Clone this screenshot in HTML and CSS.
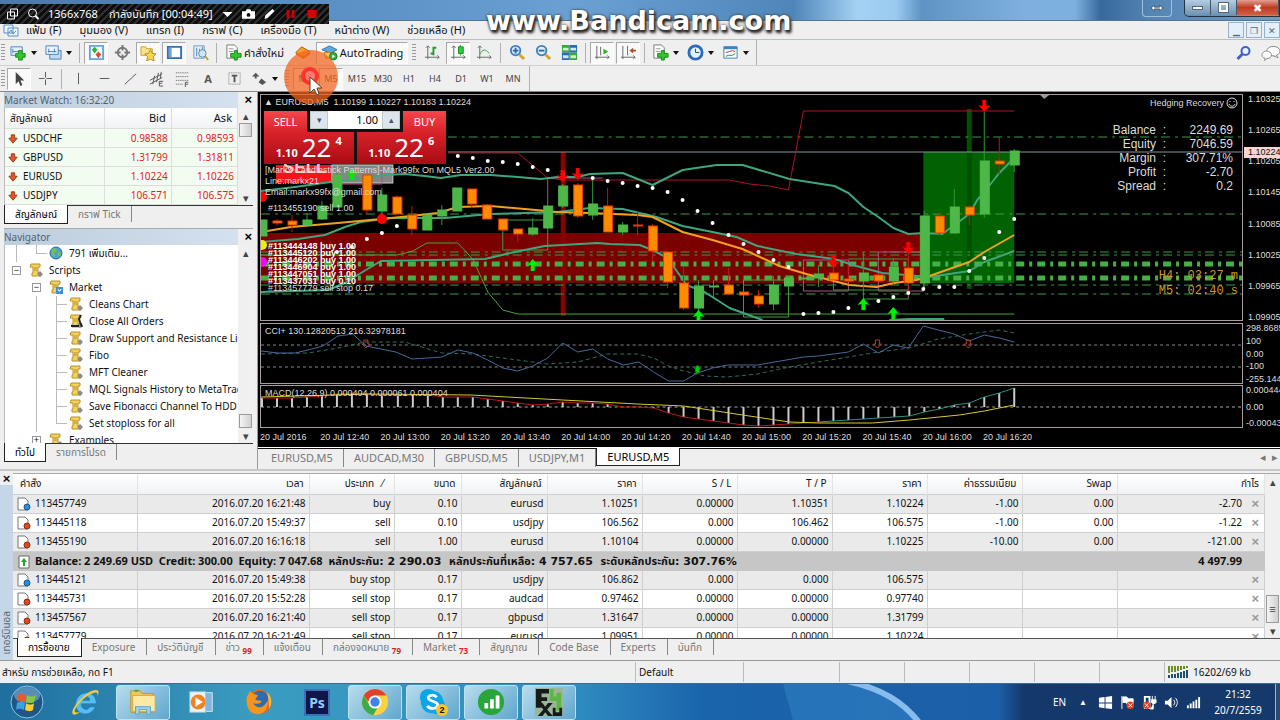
FILE: index.html
```html
<!DOCTYPE html>
<html lang="th">
<head>
	<meta charset="UTF-8">
	<title>EURUSD,M5</title>
	<link rel="stylesheet" href="styles.css">
</head>
<body>
	<!-- icons -->
	<svg class="defs" aria-hidden="true">
		<symbol id="i-win" viewBox="0 0 16 16"><path d="M1 3h9v8H1zM5 6h10v8H5z" fill="#eef6fd" stroke="#5b8fc0"/><path d="M6 11l2-3 2 4 3-3" fill="none" stroke="#5b8fc0"/></symbol>
		<symbol id="i-newchart" viewBox="0 0 18 18"><path d="M1 3h12v9H1z" fill="#e5f2fc" stroke="#4d86b8"/><path d="M3 5v5M3 8h6" stroke="#4d86b8" fill="none"/><path d="M9 7h4v3h3v4h-3v3H9v-3H6v-4h3z" fill="#31c52f" stroke="#168a18"/></symbol>
		<symbol id="i-profile" viewBox="0 0 18 18"><path d="M5 7h12v9H5z" fill="#bcdcf5" stroke="#4a7fb5"/><path d="M1 2h13v9H1z" fill="#e9f4fd" stroke="#4a7fb5"/><path d="M3 8h9M4 5v4M10 5v4" stroke="#4a7fb5"/></symbol>
		<symbol id="i-market" viewBox="0 0 18 18"><path d="M2 2h14v14H2z" fill="#f7fbff" stroke="#6aa3dc" stroke-width="2"/><path d="M7 3l3 3-3 4-3-4z" fill="#2fb32f"/><path d="M11 8l3 3-3 4-3-4z" fill="#e24b21"/></symbol>
		<symbol id="i-data" viewBox="0 0 18 18"><circle cx="9" cy="9" r="5" fill="none" stroke="#777" stroke-width="2"/><path d="M9 1v6M9 11v6M1 9h6M11 9h6" stroke="#777" stroke-width="2"/></symbol>
		<symbol id="i-star" viewBox="0 0 18 18"><path d="M1 3h5l1 2h6v7H1z" fill="#fbe48c" stroke="#c79f2c"/><path d="M11 6l2 4 4 .5-3 3 1 4.500-4-2-4 2 1-4.500-3-3 4-.5z" fill="#ffd646" stroke="#b5882a"/></symbol>
		<symbol id="i-term" viewBox="0 0 18 18"><path d="M2 3h14v12H2z" fill="#fff" stroke="#2f6fb8" stroke-width="2"/><path d="M3 4h3v10H3z" fill="#6aa5dc"/></symbol>
		<symbol id="i-tester" viewBox="0 0 18 18"><path d="M2 2h11v13H2z" fill="#e7f1fa" stroke="#6b96bd"/><path d="M5 4v9M8 5v8M11 3v7" stroke="#4a7fb5"/><circle cx="11" cy="10" r="4" fill="#cfe5f5" stroke="#5c87ae"/><path d="M14 13l3 4" stroke="#c8952f" stroke-width="2"/></symbol>
		<symbol id="i-order" viewBox="0 0 18 18"><path d="M2 1h8l3 3v11H2z" fill="#fdfdfd" stroke="#777"/><path d="M4 5h5M4 8h5" stroke="#999"/><path d="M10 7h3v3h4v4h-4v3h-3v-3H6v-4h4z" fill="#31c52f" stroke="#168a18"/></symbol>
		<symbol id="i-meta" viewBox="0 0 18 18"><path d="M2 9l6-6 9 5-7 7z" fill="#f7a02b" stroke="#a8590d"/><path d="M2 9l8 4v3l-8-5zM10 13l7-5v3l-7 5z" fill="#d0730f"/></symbol>
		<symbol id="i-auto" viewBox="0 0 18 18"><path d="M1 6l8-4 8 4-7 4z" fill="#5aa8dc" stroke="#2c76ad"/><path d="M3 9h10l-2 6H5z" fill="#f3cc5c" stroke="#b5882a"/><circle cx="13" cy="13" r="4" fill="#2fb23b" stroke="#158024"/><path d="M12 11l3 2-3 2z" fill="#fff"/></symbol>
		<symbol id="i-bars" viewBox="0 0 18 18"><path d="M4 2v14M2 4l2-2 2 2M1 14h15M14 12l2 2-2 2" fill="none" stroke="#666"/><path d="M10 3v9M10 4h3M7 10h3" stroke="#1d9d2b" stroke-width="2"/></symbol>
		<symbol id="i-candle" viewBox="0 0 18 18"><path d="M4 2v14M2 4l2-2 2 2M1 14h15M14 12l2 2-2 2" fill="none" stroke="#666"/><path d="M11 1v11" stroke="#178a22"/><path d="M9 3h5v7H9z" fill="#2fd03a" stroke="#178a22"/></symbol>
		<symbol id="i-line" viewBox="0 0 18 18"><path d="M4 2v14M2 4l2-2 2 2M1 14h15M14 12l2 2-2 2" fill="none" stroke="#666"/><path d="M4 11c3-6 6-6 10-1" fill="none" stroke="#3aa845"/></symbol>
		<symbol id="i-zin" viewBox="0 0 18 18"><path d="M11 11l5 5" stroke="#d3a52c" stroke-width="3"/><circle cx="7" cy="7" r="5" fill="#dff0fc" stroke="#3f7fc4" stroke-width="2"/><path d="M4 7h6M7 4v6" stroke="#2869b5" stroke-width="2"/></symbol>
		<symbol id="i-zout" viewBox="0 0 18 18"><path d="M11 11l5 5" stroke="#d3a52c" stroke-width="3"/><circle cx="7" cy="7" r="5" fill="#dff0fc" stroke="#3f7fc4" stroke-width="2"/><path d="M4 7h6" stroke="#2869b5" stroke-width="2"/></symbol>
		<symbol id="i-tile" viewBox="0 0 18 18"><path d="M1 1h8v8H1zM9 9h8v8H9z" fill="#3aa63c"/><path d="M9 1h8v8H9zM1 9h8v8H1z" fill="#2c69b8"/><path d="M2 4h6v3H2zM10 4h6v3h-6zM2 12h6v3H2zM10 12h6v3h-6z" fill="#d3ead8"/></symbol>
		<symbol id="i-scroll" viewBox="0 0 18 18"><path d="M3 2v14M1 14h15M14 12l2 2-2 2M7 3v9" fill="none" stroke="#666"/><path d="M10 5l5 3-5 3z" fill="#2fb32f"/></symbol>
		<symbol id="i-shift" viewBox="0 0 18 18"><path d="M3 2v14M1 14h15M14 12l2 2-2 2M8 2v10" fill="none" stroke="#666"/><path d="M10 7l4-3v2h3v2h-3v2z" fill="#b5482a"/></symbol>
		<symbol id="i-clock" viewBox="0 0 18 18"><circle cx="9" cy="9" r="7" fill="#e4f2fd" stroke="#2b6cb8" stroke-width="3"/><path d="M9 5v4h4" fill="none" stroke="#234f84"/></symbol>
		<symbol id="i-tpl" viewBox="0 0 18 18"><path d="M2 3h14v12H2z" fill="#f6fbff" stroke="#3e81c4"/><path d="M2 4h14" stroke="#3e81c4" stroke-width="3"/><path d="M4 9l4-1 3-1 3 1" fill="none" stroke="#b33"/><path d="M4 13l3-1 4 0 3-2" fill="none" stroke="#2a8f3c"/></symbol>
		<symbol id="i-cursor" viewBox="0 0 18 18"><path d="M5 2v13l3-3 2 5 2-1-2-5h4z" fill="#444"/></symbol>
		<symbol id="i-cross" viewBox="0 0 18 18"><path d="M9 2v6M9 10v6M2 9h6M10 9h6" stroke="#555"/></symbol>
		<symbol id="i-vl" viewBox="0 0 18 18"><path d="M9 3v12" stroke="#555"/></symbol>
		<symbol id="i-hl" viewBox="0 0 18 18"><path d="M4 9h10" stroke="#555"/></symbol>
		<symbol id="i-dl" viewBox="0 0 18 18"><path d="M3 15L15 4" stroke="#555"/></symbol>
		<symbol id="i-ch" viewBox="0 0 18 18"><path d="M2 11L15 4M2 15l13-7M5 15l2-9M9 13l2-10M13 9l1-7" stroke="#555"/><path d="M16 12h-4v5h4M12 14h3" stroke="#555" fill="none"/></symbol>
		<symbol id="i-fibo" viewBox="0 0 18 18"><path d="M2 3h13M2 7h13M2 11h13M2 15h8" stroke="#555" stroke-dasharray="1 1"/><path d="M15 13h-3v5M12 15h3" stroke="#555" fill="none"/></symbol>
		<symbol id="i-box" viewBox="0 0 18 18"><path d="M3 3h12v12H3z" fill="none" stroke="#777" stroke-dasharray="1 1"/><path d="M6 6h6M9 6v7" stroke="#555" stroke-width="2"/></symbol>
		<symbol id="i-arr" viewBox="0 0 18 18"><path d="M5 3l4 4H6v2H4V7H1zM11 9l5 4-4 3-4-3z" fill="#555"/></symbol>
		<symbol id="i-down" viewBox="0 0 12 12"><path d="M4 1h4v4h3L6 11 1 5h3z" fill="#e2582c" stroke="#8c2c12"/></symbol>
		<symbol id="i-script" viewBox="0 0 14 14"><path d="M2 1h9v3H9v6h3v3H3v-3h1V4H1z" fill="#f3d358" stroke="#b8902a"/><path d="M5 5h3M5 7h3" stroke="#b8902a"/><path d="M11 8l3 3-3 3-3-3z" fill="#8b8b8b"/></symbol>
		<symbol id="i-globe" viewBox="0 0 14 14"><circle cx="7" cy="7" r="6" fill="#4c9ee0" stroke="#2467a3"/><path d="M3 3l4-1 1 3-3 2 1 3-2 1-2-4zM9 6l3 0-1 4-2 1z" fill="#74c543"/></symbol>
		<symbol id="i-doc-buy" viewBox="0 0 14 14"><path d="M1 1h7l3 3v9H1z" fill="#fff" stroke="#777"/><circle cx="10" cy="10" r="3" fill="#2c8ed8" stroke="#15568c"/></symbol>
		<symbol id="i-doc-sell" viewBox="0 0 14 14"><path d="M1 1h7l3 3v9H1z" fill="#fff" stroke="#777"/><circle cx="10" cy="10" r="3" fill="#dd4a20" stroke="#8c2c12"/></symbol>
		<symbol id="i-doc-up" viewBox="0 0 14 14"><path d="M2 1h10v12H2z" fill="#fff" stroke="#666"/><path d="M7 3l3 4H8v4H6V7H4z" fill="#1fa32a"/></symbol>
	</svg>

	<header class="titlebar">
		<div class="wm">
			<button class="wm-switch" aria-label="Switch"><svg viewBox="0 0 16 8"><path d="M1 4l4-3v2h6V1l4 3-4 3V5H5v2z" fill="#fff" stroke="#456"/></svg></button>
			<div class="wm-group">
				<button class="wm-btn" aria-label="Minimize"><i class="wm-min"></i></button>
				<button class="wm-btn" aria-label="Restore"><i class="wm-max"></i></button>
				<button class="wm-btn wm-close" aria-label="Close">✖</button>
			</div>
		</div>
		<div class="recorder">
			<svg class="rec-ic" viewBox="0 0 12 12"><path d="M4 1h7v7H4zM1 4h7v7H1z" fill="none" stroke="#fff"/></svg>
			<svg class="rec-ic" viewBox="0 0 12 12"><circle cx="5" cy="5" r="4" fill="none" stroke="#fff"/><path d="M8 8l3 3" stroke="#fff" stroke-width="2"/></svg>
			<span class="rec-size">1366x768</span>
			<span class="rec-state">กำลังบันทึก [00:04:49]</span>
			<svg class="rec-ic" viewBox="0 0 12 12"><path d="M1 4h10L6 9z" fill="#fff"/></svg>
			<svg class="rec-ic" viewBox="0 0 14 12"><path d="M0 3h4l1-2h4l1 2h4v8H0z" fill="#fff"/><circle cx="7" cy="7" r="2" fill="#111"/></svg>
			<svg class="rec-ic" viewBox="0 0 12 12"><path d="M1 11l1-4 7-6 2 2-7 7z" fill="#fff"/></svg>
			<svg class="rec-ic" viewBox="0 0 12 12"><path d="M2 2h3v8H2zM7 2h3v8H7z" fill="#c00"/></svg>
			<svg class="rec-ic" viewBox="0 0 12 12"><path d="M2 2h9v8H2z" fill="#d80000"/></svg>
		</div>
		<div class="watermark">www.Bandicam.com</div>
	</header>

	<nav class="menubar">
		<svg class="menu-ic"><use href="#i-win"/></svg>
		<button>แฟ้ม (F)</button><button>มุมมอง (V)</button><button>แทรก (I)</button><button>กราฟ (C)</button><button>เครื่องมือ (T)</button><button>หน้าต่าง (W)</button><button>ช่วยเหลือ (H)</button>
		<div class="mdi">
			<button aria-label="Minimize">▁</button><button aria-label="Restore">❐</button><button aria-label="Close">✕</button>
		</div>
	</nav>

	<div class="toolbars">
		<div class="toolbar">
			<i class="grip"></i>
			<button class="tool drop" aria-label="New chart"><svg><use href="#i-newchart"/></svg></button>
			<button class="tool drop" aria-label="Profiles"><svg><use href="#i-profile"/></svg></button>
			<i class="sep"></i>
			<button class="tool on" aria-label="Market Watch"><svg><use href="#i-market"/></svg></button>
			<button class="tool" aria-label="Data Window"><svg><use href="#i-data"/></svg></button>
			<button class="tool on" aria-label="Navigator"><svg><use href="#i-star"/></svg></button>
			<button class="tool on" aria-label="Terminal"><svg><use href="#i-term"/></svg></button>
			<button class="tool" aria-label="Tester"><svg><use href="#i-tester"/></svg></button>
			<i class="sep"></i>
			<button class="tool order"><svg><use href="#i-order"/></svg>คำสั่งใหม่</button>
			<button class="tool" aria-label="MetaEditor"><svg><use href="#i-meta"/></svg></button>
			<button class="tool on auto"><svg><use href="#i-auto"/></svg>AutoTrading</button>
			<i class="grip"></i>
			<button class="tool" aria-label="Bars"><svg><use href="#i-bars"/></svg></button>
			<button class="tool on" aria-label="Candles"><svg><use href="#i-candle"/></svg></button>
			<button class="tool" aria-label="Line"><svg><use href="#i-line"/></svg></button>
			<i class="sep"></i>
			<button class="tool" aria-label="Zoom in"><svg><use href="#i-zin"/></svg></button>
			<button class="tool" aria-label="Zoom out"><svg><use href="#i-zout"/></svg></button>
			<button class="tool" aria-label="Tile"><svg><use href="#i-tile"/></svg></button>
			<i class="sep"></i>
			<button class="tool on" aria-label="Auto scroll"><svg><use href="#i-scroll"/></svg></button>
			<button class="tool on" aria-label="Chart shift"><svg><use href="#i-shift"/></svg></button>
			<i class="sep"></i>
			<button class="tool drop" aria-label="Indicators"><svg><use href="#i-order"/></svg></button>
			<button class="tool drop" aria-label="Periods"><svg><use href="#i-clock"/></svg></button>
			<button class="tool drop" aria-label="Templates"><svg><use href="#i-tpl"/></svg></button>
			<i class="sep end"></i>
			<div class="tool-right">
				<svg viewBox="0 0 18 18"><path d="M3 15l5-5" stroke="#3c62c4" stroke-width="3"/><circle cx="11" cy="7" r="4" fill="#eef" stroke="#3c62c4" stroke-width="2"/></svg>
				<svg viewBox="0 0 20 18"><ellipse cx="13" cy="7" rx="7" ry="5" fill="#fff" stroke="#888"/><ellipse cx="6" cy="11" rx="5" ry="4" fill="#fff" stroke="#888"/><path d="M4 14v3l3-3M16 11l2 3-5-2" fill="#fff" stroke="#888"/></svg>
			</div>
		</div>
		<div class="toolbar">
			<i class="grip"></i>
			<button class="tool on" aria-label="Cursor"><svg><use href="#i-cursor"/></svg></button>
			<button class="tool" aria-label="Crosshair"><svg><use href="#i-cross"/></svg></button>
			<i class="sep"></i>
			<button class="tool" aria-label="Vertical line"><svg><use href="#i-vl"/></svg></button>
			<button class="tool" aria-label="Horizontal line"><svg><use href="#i-hl"/></svg></button>
			<button class="tool" aria-label="Trendline"><svg><use href="#i-dl"/></svg></button>
			<button class="tool" aria-label="Channel"><svg><use href="#i-ch"/></svg></button>
			<button class="tool" aria-label="Fibonacci"><svg><use href="#i-fibo"/></svg></button>
			<button class="tool letter">A</button>
			<button class="tool" aria-label="Text label"><svg><use href="#i-box"/></svg></button>
			<button class="tool drop" aria-label="Arrows"><svg><use href="#i-arr"/></svg></button>
			<i class="grip"></i>
			<button class="tool tf on">M1</button><button class="tool tf on">M5</button><button class="tool tf">M15</button><button class="tool tf">M30</button><button class="tool tf">H1</button><button class="tool tf">H4</button><button class="tool tf">D1</button><button class="tool tf">W1</button><button class="tool tf">MN</button>
			<i class="sep end"></i>
			<svg class="click" viewBox="0 0 56 56"><circle cx="28" cy="28" r="27" fill="#f26522" opacity=".75"/><circle cx="27" cy="27" r="7" fill="#f77" stroke="#f22" stroke-width="4" opacity=".8"/><path d="M27 28v16l4-4 3 6 2-1-2-6h5z" fill="#fff" stroke="#543"/></svg>
		</div>
	</div>

	<div class="workspace">
		<aside class="sidebar">
			<section class="panel">
				<h2 class="panel-title">Market Watch: 16:32:20<button aria-label="Close">×</button></h2>
				<div class="panel-body">
					<table class="quotes">
						<thead><tr><th>สัญลักษณ์</th><th>Bid</th><th>Ask</th></tr></thead>
						<tbody>
							<tr><td><svg><use href="#i-down"/></svg>USDCHF</td><td>0.98588</td><td>0.98593</td></tr>
							<tr><td><svg><use href="#i-down"/></svg>GBPUSD</td><td>1.31799</td><td>1.31811</td></tr>
							<tr><td><svg><use href="#i-down"/></svg>EURUSD</td><td>1.10224</td><td>1.10226</td></tr>
							<tr><td><svg><use href="#i-down"/></svg>USDJPY</td><td>106.571</td><td>106.575</td></tr>
						</tbody>
					</table>
					<div class="scroll"><span>▴</span><i></i><b></b><span>▾</span></div>
				</div>
				<div class="tabs"><button class="tab active">สัญลักษณ์</button><button class="tab">กราฟ Tick</button></div>
			</section>
			<section class="panel">
				<h2 class="panel-title">Navigator<button aria-label="Close">×</button></h2>
				<div class="panel-body">
					<ul class="tree">
						<li><i class="g"></i><i class="g last"></i><svg><use href="#i-globe"/></svg>791 เพิ่มเติม...</li>
						<li><i class="g box">−</i><svg><use href="#i-script"/></svg>Scripts</li>
						<li><i class="g none"></i><i class="g box">−</i><svg><use href="#i-script"/><path d="M7 7h7v7H7z" fill="#3f8fe0"/><path d="M9 9l1 2h1l1-2" fill="none" stroke="#fff"/></svg>Market</li>
						<li><i class="g none"></i><i class="g"></i><i class="g leaf"></i><svg><use href="#i-script"/></svg>Cleans Chart</li>
						<li><i class="g none"></i><i class="g"></i><i class="g leaf"></i><svg><use href="#i-script"/><path d="M12 1l-2 4 1 3 2 5M2 12h8" fill="none" stroke="#222" stroke-width="2"/></svg>Close All Orders</li>
						<li><i class="g none"></i><i class="g"></i><i class="g leaf"></i><svg><use href="#i-script"/></svg>Draw Support and Resistance Lines</li>
						<li><i class="g none"></i><i class="g"></i><i class="g leaf"></i><svg><use href="#i-script"/></svg>Fibo</li>
						<li><i class="g none"></i><i class="g"></i><i class="g leaf"></i><svg><use href="#i-script"/></svg>MFT Cleaner</li>
						<li><i class="g none"></i><i class="g"></i><i class="g leaf"></i><svg><use href="#i-script"/></svg>MQL Signals History to MetaTrader</li>
						<li><i class="g none"></i><i class="g"></i><i class="g leaf"></i><svg><use href="#i-script"/></svg>Save Fibonacci Channel To HDD</li>
						<li><i class="g none"></i><i class="g"></i><i class="g last"></i><svg><use href="#i-script"/></svg>Set stoploss for all</li>
						<li><i class="g none"></i><i class="g box">+</i><svg><use href="#i-script"/></svg>Examples</li>
					</ul>
					<div class="scroll low"><span>▴</span><b></b><i></i><span>▾</span></div>
				</div>
				<div class="tabs"><button class="tab active">ทั่วไป</button><button class="tab">รายการโปรด</button></div>
			</section>
		</aside>

		<main class="charts">
			<div class="chart">
				<div class="pane price">
					<svg viewBox="261 95 982 225" preserveAspectRatio="none" id="price">
						<rect x="261" y="233" width="663" height="50" fill="#7b0000"/>
						<rect x="561" y="152" width="5" height="164" fill="#8b0000"/>
						<rect x="924" y="152" width="91" height="131" fill="#006200"/>
						<path d="M970 109v180" stroke="#005000" stroke-width="5"/>
						<path d="M448 152h795" stroke="#8795a0"/>
						<path d="M448 137h795M261 214h982M261 252h982M261 255h982M261 285h982M261 294h982" stroke="#3f9a48" stroke-dasharray="9 5 3 4"/>
						<path d="M261 264h982M261 278h982" stroke="#45b045" stroke-width="5" stroke-dasharray="8 5 3 5"/>
						<rect x="276" y="165" width="56" height="18" fill="#f5131c"/>
						<rect x="332" y="165" width="61" height="18" fill="#858585" stroke="#ccc"/>
						<g fill="none" stroke-linejoin="round">
							<path d="M448 153h70l30 25 15 2h167l20 4 20 2 19 4 15-79h211" stroke="#b3141c"/>
							<path d="M338 184h44v-18M548 206v-28h55M804 260h45v31h-45zM879 252h45v39h-45z" stroke="#b0508a"/>
							<path d="M503 220v30h45v-30zM744 280v37h45v-37zM834 259v31h75M864 299h45v-40h-60" stroke="#3c9e3c"/>
							<path d="M261 255h137l15-4 14-8h31l15 16 15 33 15 18 15 4h497" stroke="#45a835"/>
							<g stroke="#3fa57c" stroke-width="2">
								<path d="M261 191l34-4 43-6 47-6 20-1 20 2 16 2 20-3h30l27 2 23 2 17-2h20l12-3 33-1 15 6 15 6 30-15 34-5h26l47 14 45 7 14 7 15 14 15 10 15 11 15 6 15-1 19 1 27-20 8-14 7-8 15-19 15-15"/>
								<path d="M261 242l37-3 27-4 20-8 16-5 30-4h54l46-4 67-2 32-4 33 1 34 8 26 9 30 6 24 5 21 9 39 8 38 5 22 7 26 7 47 4 40-6 15-9 30-11"/>
								<path d="M261 292l67-2 17-7 16-10 20-12 104-2 30-7 30-6 53-3 12 1 30 1 13 5 15 8 19 27 18 7 25 16 33 12M890 320l20-1h35"/>
							</g>
							<path d="M261 232l30-5 47-4 43-4 30-3 27-3 20-6 33-1 34 3 33 3 32 1 48 2 15 2 30 15 30 8 30 9 37 17 27 8 43 11 27 2 18-4 22-3 16-5 37-13 15-10 30-17" stroke="#f0a020" stroke-width="2"/>
						</g>
						<circle cx="382" cy="219" r="5" fill="#f00"/><circle cx="262" cy="197" r="5" fill="#f00"/><circle cx="262" cy="245" r="5" fill="#ee0"/><circle cx="262" cy="262" r="5" fill="#f0f"/>
						<path d="M1041 95h9l-5 4z" fill="#999"/>
					</svg>
					<div class="sell-tag">SELL</div>
					<div class="chart-title">▲ EURUSD,M5 &nbsp;1.10199 1.10227 1.10183 1.10224</div>
					<div class="trade">
						<div class="trade-top">
							<button class="t-name">SELL</button>
							<div class="lot"><button aria-label="Less">▾</button><input aria-label="Volume" value="1.00"><button aria-label="More">▴</button></div>
							<button class="t-name">BUY</button>
						</div>
						<div class="trade-bottom">
							<button class="t-price"><small>1.10</small><b>22</b><sup>4</sup></button>
							<button class="t-price"><small>1.10</small><b>22</b><sup>6</sup></button>
						</div>
					</div>
					<div class="author">[Markx Candlestick Patterns]-Mark99fx On MQL5 Ver2.00<br>Line:markx21<br>Email:markx99fx@gmail.com</div>
					<div class="ord o1">#113455190 sell 1.00</div>
					<div class="ord o2">#113444148 buy 1.00<br>#113445120 buy 1.00<br>#113446202 buy 1.00<br>#113446904 buy 1.00<br>#113447051 buy 1.00<br>#113437031 buy 0.10</div>
					<div class="ord o3">#113457779 sell stop 0.17</div>
					<div class="expert">Hedging Recovery<svg viewBox="0 0 12 12"><circle cx="6" cy="6" r="5" fill="none" stroke="#ddd"/><path d="M4 4v1M8 4v1M3 7c1 3 5 3 6 0" fill="none" stroke="#ddd"/></svg></div>
					<dl class="account"><dt>Balance &nbsp;:</dt><dd>2249.69</dd><dt>Equity &nbsp;:</dt><dd>7046.59</dd><dt>Margin &nbsp;:</dt><dd>307.71%</dd><dt>Profit &nbsp;:</dt><dd>-2.70</dd><dt>Spread &nbsp;:</dt><dd>0.2</dd></dl>
					<div class="timers">H4: 03:27 m<br>M5: 02:40 s</div>
				</div>
				<div class="axis price-axis"><span>1.10325</span><span>1.10265</span><span>1.10205</span><span>1.10145</span><span>1.10085</span><span>1.10025</span><span>1.09965</span><span>1.09905</span><b>1.10224</b></div>

				<div class="pane">
					<svg class="cci" viewBox="261 324 982 59" preserveAspectRatio="none">
						<path d="M261 345h982M261 367h982" stroke="#888" stroke-dasharray="3 3"/>
						<g fill="none">
							<path d="M261 354l47-1 30-5 27-6h40l37 11 31 1 30 4 45 6 30-2 30-8h30l16 4 15 8 15 5 21 5 23 1 30-3 32-7 29-5 30-5 30-5 31-4 29-9 31-5 30-4 15 3" stroke="#2f6e62" stroke-dasharray="4 3"/>
							<path d="M261 351l17 2h17l13-3 15-4 15-10 15-2 13 12 15 3 15 3 16 7 16-1 14-1 16-7 15 3 15 7 15 8 15 3 15-5 15-8 15-15 15 9 15-3 15 10 16 6 15-3 15 10 15 9h15l14-8 15-5 15-3h30l46-8 15-1 30-4 15-8 15 9 15-8 15 3 15-22 15 4 16 4 15 7 15-6 15 3 15 4" stroke="#48699c"/>
							<path d="M364 340h4v4h2l-4 4-4-4h2zM876 340h4v4h2l-4 4-4-4h2zM967 340h4v4h2l-4 4-4-4h2z" stroke="#b8401c"/>
							<path d="M696 373v-4h-1l3-4 3 4h-1v4z" stroke="#080" fill="#0c1"/>
						</g>
					</svg>
					<div class="ind-title">CCI+ 130.12820513 216.32978181</div>
				</div>
				<div class="axis"><span>298.8685</span><span>100</span><span>0.00</span><span>-100</span><span>-255.144</span></div>

				<div class="pane">
					<svg class="macd" viewBox="261 386 982 41" preserveAspectRatio="none" id="macd">
						<path d="M261 407h982" stroke="#aaa" stroke-dasharray="3 3"/>
					</svg>
					<div class="ind-title">MACD(12,26,9) 0.000404 0.000061 0.000404</div>
				</div>
				<div class="axis"><span>0.000444</span><span>0.00</span><span>-0.00043</span></div>
				<div class="times"><span>20 Jul 2016</span><span>20 Jul 12:40</span><span>20 Jul 13:00</span><span>20 Jul 13:20</span><span>20 Jul 13:40</span><span>20 Jul 14:00</span><span>20 Jul 14:20</span><span>20 Jul 14:40</span><span>20 Jul 15:00</span><span>20 Jul 15:20</span><span>20 Jul 15:40</span><span>20 Jul 16:00</span><span>20 Jul 16:20</span></div>
			</div>
			<div class="tabs chart-tabs"><button class="tab">EURUSD,M5</button><button class="tab">AUDCAD,M30</button><button class="tab">GBPUSD,M5</button><button class="tab">USDJPY,M1</button><button class="tab active">EURUSD,M5</button><span class="tab-arrows">◂ &nbsp;▸</span></div>
		</main>
	</div>

	<section class="terminal">
		<div class="strip"><button aria-label="Close">×</button><span>เทอร์มินอล</span></div>
		<div class="term-main">
			<div class="term-body">
				<table class="orders">
					<colgroup><col class="c-id"><col class="c-time"><col class="c-type"><col class="c-lot"><col class="c-sym"><col class="c-num"><col class="c-num"><col class="c-num"><col class="c-num"><col class="c-num"><col class="c-num"><col></colgroup>
					<thead><tr><th>คำสั่ง</th><th>เวลา</th><th>ประเภท &nbsp; ⁄ &nbsp;</th><th>ขนาด</th><th>สัญลักษณ์</th><th>ราคา</th><th>S / L</th><th>T / P</th><th>ราคา</th><th>ค่าธรรมเนียม</th><th>Swap</th><th>กำไร</th></tr></thead>
					<tbody>
						<tr><td><svg><use href="#i-doc-buy"/></svg>113457749</td><td>2016.07.20 16:21:48</td><td>buy</td><td>0.10</td><td>eurusd</td><td>1.10251</td><td>0.00000</td><td>1.10351</td><td>1.10224</td><td>-1.00</td><td>0.00</td><td>-2.70<button aria-label="Close order">×</button></td></tr>
						<tr><td><svg><use href="#i-doc-sell"/></svg>113445118</td><td>2016.07.20 15:49:37</td><td>sell</td><td>0.10</td><td>usdjpy</td><td>106.562</td><td>0.000</td><td>106.462</td><td>106.575</td><td>-1.00</td><td>0.00</td><td>-1.22<button aria-label="Close order">×</button></td></tr>
						<tr><td><svg><use href="#i-doc-sell"/></svg>113455190</td><td>2016.07.20 16:16:18</td><td>sell</td><td>1.00</td><td>eurusd</td><td>1.10104</td><td>0.00000</td><td>0.00000</td><td>1.10225</td><td>-10.00</td><td>0.00</td><td>-121.00<button aria-label="Close order">×</button></td></tr>
						<tr class="sum"><td colspan="11"><svg><use href="#i-doc-up"/></svg>Balance: 2 249.69 USD &nbsp;Credit: 300.00 &nbsp;Equity: 7 047.68 &nbsp;<span>หลักประกัน: 2 290.03 &nbsp;หลักประกันที่เหลือ: 4 757.65 &nbsp;ระดับหลักประกัน: 307.76%</span></td><td>4 497.99</td></tr>
						<tr><td><svg><use href="#i-doc-buy"/></svg>113445121</td><td>2016.07.20 15:49:38</td><td>buy stop</td><td>0.17</td><td>usdjpy</td><td>106.862</td><td>0.000</td><td>0.000</td><td>106.575</td><td></td><td></td><td><button aria-label="Close order">×</button></td></tr>
						<tr><td><svg><use href="#i-doc-sell"/></svg>113445731</td><td>2016.07.20 15:52:28</td><td>sell stop</td><td>0.17</td><td>audcad</td><td>0.97462</td><td>0.00000</td><td>0.00000</td><td>0.97740</td><td></td><td></td><td><button aria-label="Close order">×</button></td></tr>
						<tr><td><svg><use href="#i-doc-sell"/></svg>113457567</td><td>2016.07.20 16:21:40</td><td>sell stop</td><td>0.17</td><td>gbpusd</td><td>1.31647</td><td>0.00000</td><td>0.00000</td><td>1.31799</td><td></td><td></td><td><button aria-label="Close order">×</button></td></tr>
						<tr><td><svg><use href="#i-doc-sell"/></svg>113457779</td><td>2016.07.20 16:21:49</td><td>sell stop</td><td>0.17</td><td>eurusd</td><td>1.09951</td><td>0.00000</td><td>0.00000</td><td>1.10224</td><td></td><td></td><td><button aria-label="Close order">×</button></td></tr>
					</tbody>
				</table>
				<div class="scroll low"><span>▴</span><b></b><i class="long">≡</i><span>▾</span></div>
			</div>
			<div class="tabs term-tabs"><button class="tab active">การซื้อขาย</button><button class="tab">Exposure</button><button class="tab">ประวัติบัญชี</button><button class="tab">ข่าว <sub>99</sub></button><button class="tab">แจ้งเตือน</button><button class="tab">กล่องจดหมาย <sub>79</sub></button><button class="tab">Market <sub>73</sub></button><button class="tab">สัญญาณ</button><button class="tab">Code Base</button><button class="tab">Experts</button><button class="tab">บันทึก</button></div>
		</div>
	</section>

	<div class="status">
		<span class="st-help">สำหรับ การช่วยเหลือ, กด F1</span><span class="st-prof">Default</span><span class="w96"></span><span class="w66"></span><span class="w66"></span><span class="w66"></span><span class="w66"></span><span class="w66"></span>
		<span class="st-net"><svg viewBox="0 0 22 14"><path d="M1 1v7M4 1v6M7 1v6M10 1v5M13 1v4M16 1v3M19 1v2" stroke="#6f8f1c" stroke-width="2"/><path d="M1 10v3M4 9v4M7 9v4M10 8v5M13 7v6M16 6v7M19 5v8" stroke="#1c4f6c" stroke-width="2"/></svg>16202/69 kb</span>
	</div>

	<footer class="taskbar">
		<svg class="swoosh" viewBox="0 0 160 37"><path d="M0 0h68c40 8 60 20 74 37H10z" fill="#3d8fd0" opacity=".4"/><path d="M66-3c36 8 58 22 74 43" fill="none" stroke="#86bdec" stroke-width="6"/></svg>
		<button class="task start" aria-label="Start"><svg viewBox="0 0 36 36"><circle cx="18" cy="18" r="16" fill="#1d5687" stroke="#8ec4e8"/><ellipse cx="18" cy="11" rx="13" ry="8" fill="#7fb2d8" opacity=".6"/><path d="M9 11c3-2 5-1 8 0l-1 7c-3-1-5-2-8 0z" fill="#ee5a24"/><path d="M18 11c3 2 6 2 9 0l-2 7c-3 2-5 1-8 0z" fill="#8cc63f"/><path d="M8 19c3-2 5-1 8 0l-1 7c-3-1-5-2-8 0z" fill="#3aa0e8"/><path d="M17 19c3 2 6 2 8 0l-1 7c-3 2-5 1-8 0z" fill="#fbcf2f"/></svg></button>
		<button class="task" aria-label="Internet Explorer"><svg viewBox="0 0 32 32"><path d="M27 21h-6c-2 5-9 3-9-3h16c1-15-20-16-22-1-1 14 17 16 21 4zM12 14c1-5 9-5 9 0z" fill="#56bdf0" stroke="#1d7fc0"/><path d="M3 29C-1 23 22-1 30 4c1 2 0 4-1 6 1-3 0-5-3-4C17 8 5 21 5 26c1 2 4 1 6 0-3 3-6 4-8 3z" fill="#f8cb3c"/></svg></button>
		<button class="task open" aria-label="Explorer"><svg viewBox="0 0 32 32"><path d="M3 4h10l2 3h12v20H3z" fill="#f0c75a" stroke="#c0932e"/><path d="M5 9h24v17H5z" fill="#fbe9a4" stroke="#cfa748"/><path d="M8 29v-8h16v8h-4v-5h-8v5z" fill="#9bd0ee" stroke="#5da2cc"/><path d="M7 3h4v2H7z" fill="#3aa845"/></svg></button>
		<button class="task" aria-label="Media Player"><svg viewBox="0 0 32 32"><path d="M20 6h8v20h-8z" fill="#7fb6dd" stroke="#d5eaf7"/><path d="M4 5h17v22H4z" fill="#e9f2f8" stroke="#9bbdd2"/><circle cx="13" cy="16" r="8" fill="#f48220"/><path d="M10 11l8 5-8 5z" fill="#fff"/></svg></button>
		<button class="task" aria-label="Firefox"><svg viewBox="0 0 32 32"><circle cx="16" cy="16" r="13" fill="#e66a1c"/><circle cx="17" cy="13" r="9" fill="#2d6cb4"/><path d="M3 10c2-2 3-4 3-6 3 3 6 4 9 5l-3 4c2 2 5 1 7 2-2 4-7 3-9 2 3 7 12 6 15-3 2 12-8 17-15 14C4 26 2 18 3 10z" fill="#f7941d"/><path d="M24 5c5 4 7 12 3 18-1-6 0-12-3-18z" fill="#fbc02d"/></svg></button>
		<button class="task" aria-label="Photoshop"><span class="ps">Ps</span></button>
		<button class="task open" aria-label="Chrome"><svg viewBox="0 0 32 32"><circle cx="16" cy="16" r="14" fill="#fdd23c"/><path d="M4 9a14 14 0 0 1 24 0H16a7 7 0 0 0-7 7z" fill="#e2402f"/><path d="M4 9a14 14 0 0 0 10 21l6-10a7 7 0 0 1-10-1z" fill="#3cab4a"/><circle cx="16" cy="16" r="7" fill="#fff"/><circle cx="16" cy="16" r="5" fill="#3f83ec"/></svg></button>
		<button class="task open" aria-label="Skype"><svg viewBox="0 0 32 32"><circle cx="11" cy="11" r="9" fill="#0aa6e8"/><circle cx="20" cy="20" r="9" fill="#0aa6e8"/><circle cx="15" cy="16" r="12" fill="#0aa6e8"/><path d="M20 11c-3-4-10-2-9 1 1 4 10 3 10 7 0 5-9 5-11 1" fill="none" stroke="#fff" stroke-width="3"/></svg><span class="badge">2</span></button>
		<button class="task open" aria-label="Signals"><svg viewBox="0 0 32 32"><circle cx="16" cy="16" r="14" fill="#2aa53a"/><path d="M9 17h4v6H9zM15 13h4v10h-4zM21 9h4v14h-4z" fill="#fff"/></svg></button>
		<button class="task open" aria-label="Trading terminal"><svg viewBox="0 0 32 32"><path d="M1 1h30v30H1z" fill="#9ab59a"/><path d="M2 2h14v5H8v4h6v4H8v7H2z" fill="#151c17"/><path d="M17 2h4v8h3V6h5v19h-5V15h-7z" fill="#5cb544"/><path d="M4 17h5l3 4 3-4h5l-6 7 6 7h-5l-3-4-3 4H4l6-7zM20 22h3v5h4v-5h3v9H20z" fill="#151c17"/></svg></button>
		<div class="tray">
			<span class="lang">EN</span><span class="up">▲</span>
			<svg viewBox="0 0 16 16"><path d="M1 3l6-1v6H1zM8 2l7-1v7H8zM1 9h6v5l-6-1zM8 9h7v6l-7-1z" fill="#fff"/></svg>
			<svg viewBox="0 0 16 16"><path d="M2 1v14M3 2h4l2 2h5v6H8L6 8H3z" fill="#fff" stroke="#fff"/><circle cx="11" cy="11" r="4" fill="#d42"/><path d="M9 9l4 4M13 9l-4 4" stroke="#fff"/></svg>
			<svg viewBox="0 0 16 16"><path d="M3 2h5v12H3z" fill="none" stroke="#fff" stroke-width="2"/><path d="M11 1v4M14 1v4M10 5h5v3l-1 1h-3l-1-1zM12 9v6H9" fill="#fff" stroke="#fff"/><circle cx="5" cy="11" r="4" fill="#d42"/><path d="M3 9l4 4M7 9l-4 4" stroke="#fff"/></svg>
			<svg viewBox="0 0 16 16"><path d="M1 6h3l4-4v12l-4-4H1z" fill="#fff"/><path d="M10 5c2 2 2 4 0 6M12 3c3 3 3 7 0 10" fill="none" stroke="#fff"/></svg>
			<svg viewBox="0 0 16 16"><path d="M2 11v3M5 9v5M8 7v7M11 5v9M14 2v12" stroke="#fff" stroke-width="2"/></svg>
			<div class="clock">21:32<br>20/7/2559</div>
			<i class="peek"></i>
		</div>
	</footer>
	<script src="chart.js"></script>
</body>
</html>
```
FILE: styles.css
```css
*{
	box-sizing: border-box;
}
body{
	margin: 0;
	min-height: 100vh;
	display: flex;
	flex-direction: column;
	background: #efefef;
	color: #111;
	font: 11px/16px "Noto Sans", "Noto Sans Thai", "Liberation Sans", sans-serif;
	overflow: hidden;
}
button{
	font: inherit;
	color: inherit;
	border: 0;
	padding: 0;
	background: none;
}
.defs{
	position: absolute;
	width: 0;
	height: 0;
}
svg{
	flex: none;
}

/* window frame */
.titlebar{
	position: relative;
	height: 21px;
	background: linear-gradient(90deg, #4a7aa8, #5d94c8 30%, #6aa0d2 45%, #4f86ba 62%, #a4d2f4 67%, #9bcaf0 70%, #5e94c4 72%, #7fb0dd 80%, #7db0de 84%, #38699c 86%, #5585b4 90%, #6f9cc4);
	border-bottom: 1px solid #56728c;
}
.wm{
	display: flex;
	justify-content: flex-end;
	gap: 12px;
}
.wm-switch{
	width: 30px;
	height: 17px;
	border: 1px solid #9fc0dc;
	border-top: 0;
	border-radius: 0 0 4px 4px;
}
.wm-switch svg{
	width: 14px;
	height: 8px;
}
.wm-group{
	display: flex;
	border: 1px solid #234;
	border-top: 0;
	border-radius: 0 0 0 5px;
	overflow: hidden;
}
.wm-btn{
	width: 26px;
	height: 15px;
	display: flex;
	align-items: center;
	justify-content: center;
	background: linear-gradient(#b5cde2, #6f93b4);
	border-right: 1px solid #456;
}
.wm-close{
	width: 42px;
	color: #fff;
	background: linear-gradient(#e0a092, #c03a20 50%, #d4603e);
}
.wm-min{
	width: 11px;
	height: 4px;
	background: #fff;
	border: 1px solid #567;
}
.wm-max{
	width: 9px;
	height: 9px;
	border: 2px solid #fff;
	outline: 1px solid #567;
}
.recorder{
	position: absolute;
	z-index: 5;
	left: 0;
	top: 4px;
	width: 329px;
	height: 20px;
	display: flex;
	align-items: center;
	gap: 8px;
	padding-left: 6px;
	color: #fff;
	background: repeating-linear-gradient(135deg, #0c0c0c 0 3px, #2e2e2e 3px 5px);
}
.rec-ic{
	width: 13px;
	height: 12px;
}
.rec-size{
	width: 53px;
}
.rec-state{
	width: 104px;
	white-space: nowrap;
}
.watermark{
	position: absolute;
	z-index: 6;
	left: 486px;
	top: 5px;
	font: bold 27px/32px "DejaVu Sans", sans-serif;
	color: #fff;
	text-shadow: 1px 2px 3px #222, 0 0 3px #333, 2px 3px 3px #555;
}

/* menu */
.menubar{
	display: flex;
	align-items: center;
	height: 19px;
	border-bottom: 1px solid #b8c0c0;
	gap: 18px;
	padding-left: 3px;
}
.menu-ic{
	width: 16px;
	height: 16px;
	margin-right: -11px;
}
.mdi{
	display: flex;
	gap: 2px;
	margin-left: auto;
	color: #567;
}
.mdi button{
	width: 16px;
	height: 16px;
	font-size: 9px;
	line-height: 13px;
	background: #e3effa;
	border: 1px solid #9ab0c4;
}

/* toolbars */
.toolbars{
	border-bottom: 1px solid #888;
}
.toolbar{
	position: relative;
	display: flex;
	align-items: center;
	height: 26px;
	border-bottom: 1px solid #d0d0d0;
}
.toolbar:last-child{
	height: 25px;
	border-bottom: 0;
}
.grip{
	width: 4px;
	height: 18px;
	margin: 0 3px;
	background: repeating-linear-gradient(#999 0 1px, #efefef 1px 3px);
	flex: none;
}
.grip:first-child{
	margin: 0 1px;
}
.sep{
	width: 1px;
	height: 20px;
	margin: 0 3px;
	background: #b0b0b0;
	flex: none;
}
.sep.end{
	height: 25px;
}
.tool{
	display: flex;
	align-items: center;
	justify-content: center;
	gap: 2px;
	width: 24px;
	height: 22px;
	margin: 0 1px;
	white-space: nowrap;
	flex: none;
}
.tool svg{
	width: 17px;
	height: 17px;
}
.tool.on{
	background: #f9f9f9;
	border: 1px solid #fff;
	border-top-color: #a8a8a8;
	border-left-color: #a8a8a8;
}
.drop{
	width: 33px;
	gap: 4px;
}
.drop::after{
	content: "";
	border: 3px solid transparent;
	border-top: 4px solid #111;
	border-bottom: 0;
}
.order{
	width: 67px;
}
.auto{
	width: 92px;
}
.letter{
	font-weight: bold;
	color: #555;
}
.tf{
	font-size: 9px;
	color: #444;
}
.tool-right{
	margin-left: auto;
	display: flex;
	gap: 8px;
}
.tool-right svg{
	width: 19px;
	height: 18px;
}
.click{
	position: absolute;
	z-index: 4;
	left: 283px;
	top: -17px;
	width: 56px;
	height: 56px;
}

/* side panels */
.workspace{
	display: flex;
	border-bottom: 2px solid #c8c8c8;
}
.sidebar{
	width: 258px;
	flex: none;
	padding: 0 4px;
	border-right: 1px solid #999;
}
.panel + .panel{
	border-top: 1px solid #aaa;
	margin-top: 2px;
}
.panel-title{
	margin: 0;
	display: flex;
	justify-content: space-between;
	height: 16px;
	padding-right: 1px;
	font-size: 10px;
	font-weight: normal;
	color: #53606d;
	background: linear-gradient(90deg, #bccddd, #d5e1ee 94%, #efefef 94%);
}
.panel-title button{
	font: bold 13px/14px "Liberation Sans", sans-serif;
	color: #000;
}
.panel-body{
	display: flex;
	background: #fff;
	border-bottom: 1px solid #333;
	border-left: 1px solid #bbb;
}
.quotes{
	flex: 1;
	border-collapse: collapse;
	table-layout: fixed;
	line-height: 18px;
}
.quotes th{
	height: 20px;
	padding: 0 5px;
	font-weight: normal;
	text-align: right;
	background: linear-gradient(#fff, #f0f2f5);
	border-right: 1px solid #ddd;
}
.quotes th:first-child{
	text-align: left;
	width: 43%;
	font-size: 10px;
}
.quotes td{
	height: 19px;
	padding: 0 3px;
	background: #f2fcf0;
	border: 1px solid #ddd;
	border-left: 0;
	font-size: 10px;
	text-align: right;
	color: #e0241c;
}
.quotes td:first-child{
	text-align: left;
	color: #111;
}
.quotes svg{
	width: 10px;
	height: 10px;
	margin-right: 5px;
	vertical-align: -2px;
}
.scroll{
	width: 15px;
	flex: none;
	display: flex;
	flex-direction: column;
	align-items: center;
	background: #f0f0f0;
	line-height: 15px;
	color: #444;
}
.scroll i{
	width: 13px;
	height: 14px;
	background: linear-gradient(90deg, #f4f4f4, #d0d0d0);
	border: 1px solid #999;
}
.scroll i.long{
	height: 28px;
	font: 11px/26px "Liberation Sans", sans-serif;
	text-align: center;
}
.scroll b{
	flex: 1;
}
.tabs{
	display: flex;
	height: 20px;
	color: #777;
}
.tab{
	height: 16px;
	padding: 0 10px;
	white-space: nowrap;
	border-right: 1px solid #888;
	font-size: 10px;
}
.tab.active{
	height: 19px;
	margin-top: -1px;
	color: #000;
	background: #fff;
	border: 1px solid #222;
	border-top: 0;
}
.tree{
	flex: 1;
	min-width: 0;
	height: 198px;
	overflow: hidden;
	margin: 0;
	padding: 0 0 0 1px;
	list-style: none;
}
.tree li{
	display: flex;
	align-items: center;
	height: 17px;
	padding-left: 10px;
	font-size: 10px;
	white-space: nowrap;
}
.tree svg{
	position: relative;
	width: 14px;
	height: 14px;
	margin: 0 6px 0 -7px;
}
.g{
	flex: none;
	width: 20px;
	height: 17px;
	background: linear-gradient(#bbb, #bbb) 0 0/1px 100% no-repeat;
}
.g.none{
	background: none;
}
.g.leaf, .g.last{
	background: linear-gradient(#bbb, #bbb) 0 0/1px 100% no-repeat, linear-gradient(#bbb, #bbb) 0 8px/11px 1px no-repeat;
}
.g.last{
	background-size: 1px 50%, 11px 1px;
}
.g.box{
	width: 9px;
	height: 9px;
	margin: 0 15px 0 -4px;
	background: #fff;
	border: 1px solid #999;
	font: 9px/7px "Liberation Sans", sans-serif;
	text-align: center;
}

/* chart */
.charts{
	flex: 1;
	min-width: 0;
}
.chart{
	display: grid;
	grid-template-columns: 1fr 37px;
	padding: 2px 0 0 2px;
	background: #000;
	color: #ddd;
	font: 9px/11px "Liberation Sans", sans-serif;
	border-bottom: 1px solid #fff;
}
.pane{
	position: relative;
	border: 1px solid #a89c9c;
	margin-bottom: 1px;
	overflow: hidden;
}
.pane.price{
	margin-bottom: 2px;
}
.pane > svg{
	display: block;
	width: 100%;
	height: 225px;
}
.pane > svg.cci{
	height: 59px;
}
.pane > svg.macd{
	height: 41px;
}
.axis{
	position: relative;
	display: flex;
	flex-direction: column;
	justify-content: space-between;
	padding-left: 3px;
	overflow: hidden;
	white-space: nowrap;
}
.price-axis{
	padding-left: 5px;
}
.price-axis b{
	position: absolute;
	left: 1px;
	right: 0;
	top: 53px;
	padding-left: 4px;
	color: #111;
	font-weight: normal;
	background: #fbd5d0;
}
.chart-title, .ind-title, .author, .ord, .sell-tag, .trade, .expert, .account, .timers{
	position: absolute;
	margin: 0;
	white-space: nowrap;
}
.chart-title{
	left: 3px;
	top: 2px;
}
.ind-title{
	left: 4px;
	top: 2px;
}
.sell-tag{
	left: 22px;
	top: 64px;
	font: bold 17px/17px "Liberation Sans", sans-serif;
	color: #fbc8c8;
}
.author{
	left: 4px;
	top: 70px;
}
.ord{
	left: 7px;
}
.o1{
	top: 108px;
}
.o2{
	top: 148px;
	font-weight: bold;
	line-height: 7px;
	color: #fff;
}
.o3{
	top: 188px;
}
.trade{
	left: 3px;
	top: 16px;
	width: 182px;
	background: #111;
}
.trade-top, .trade-bottom{
	display: flex;
	gap: 3px;
}
.trade button{
	color: #fff;
}
.trade .t-name{
	width: 43px;
	height: 21px;
	font: 11px/20px "Noto Sans", sans-serif;
	background: linear-gradient(#f6464c, #d9222a);
}
.lot{
	flex: 1;
	display: flex;
	height: 18px;
	background: #fff;
}
.trade .lot button{
	width: 18px;
	color: #456;
	background: #dde4ec;
	border: 1px solid #bcc;
}
.lot input{
	flex: 1;
	min-width: 0;
	width: 10px;
	padding: 0 4px 0 0;
	border: 0;
	text-align: right;
	font: 11px/16px "Noto Sans", sans-serif;
}
.t-price{
	flex: 1;
	display: flex;
	justify-content: center;
	height: 32px;
	background: linear-gradient(#d9222a, #a80c14);
}
.t-price small{
	font: bold 11px/42px "Noto Sans", sans-serif;
	margin-right: 4px;
}
.t-price b{
	font: 26px/30px "Noto Sans", sans-serif;
}
.t-price sup{
	font: bold 11px/18px "Noto Sans", sans-serif;
	margin-left: 4px;
}
.expert{
	right: 4px;
	top: 2px;
	display: flex;
	align-items: center;
	font-size: 9px;
}
.expert svg{
	width: 12px;
	height: 12px;
	margin-left: 2px;
}
.account{
	right: 9px;
	top: 28px;
	width: 120px;
	display: grid;
	grid-template-columns: 53px 1fr;
	font-size: 12px;
	line-height: 14px;
	text-align: right;
}
.account dt{
	display: flex;
	justify-content: flex-end;
}
.account dd{
	margin: 0;
}
.timers{
	right: 4px;
	top: 174px;
	font: 12px/15px "Liberation Mono", monospace;
	color: #c8982a;
}
.times{
	grid-column: 1 / 3;
	display: flex;
	height: 18px;
	padding-right: 37px;
	line-height: 16px;
}
.times span{
	flex: 0 0 6.13%;
	white-space: nowrap;
}
.chart-tabs{
	border-top: 1px solid #111;
	height: 21px;
	padding-left: 3px;
}
.chart-tabs .tab{
	padding: 0 10px;
	height: 18px;
	font-size: 11px;
}
.tab-arrows{
	margin-left: auto;
	padding-right: 2px;
}

/* terminal */
.terminal{
	display: flex;
	flex: 1;
	padding-top: 2px;
}
.strip{
	width: 13px;
	flex: none;
	display: flex;
	flex-direction: column;
	align-items: center;
	justify-content: space-between;
	padding-bottom: 6px;
	background: linear-gradient(#efefef 12px, #c5d6e6 12px);
}
.strip button{
	font: bold 13px/12px "Liberation Sans", sans-serif;
}
.strip span{
	writing-mode: vertical-rl;
	transform: rotate(180deg);
	font-size: 10px;
	line-height: 13px;
	color: #567;
}
.term-main{
	flex: 1;
	min-width: 0;
}
.term-body{
	display: flex;
	height: 166px;
	overflow: hidden;
	border-top: 1px solid #aaa;
	border-bottom: 1px solid #555;
}
.orders{
	flex: 1;
	width: 100px;
	height: 0;
	border-collapse: collapse;
	table-layout: fixed;
	font-size: 10px;
	line-height: 17px;
}
.c-id{
	width: 124px;
}
.c-time{
	width: 172px;
}
.c-type{
	width: 85px;
}
.c-lot{
	width: 67px;
}
.c-sym{
	width: 86px;
}
.c-num{
	width: 95px;
}
.orders th{
	height: 20px;
	padding: 0 5px;
	font-weight: normal;
	text-align: right;
	background: linear-gradient(#fff, #f0f2f5);
	border-right: 1px solid #e4e4e4;
}
.orders th:first-child{
	text-align: left;
	padding-left: 7px;
}
.orders td{
	height: 19px;
	padding: 0 3px;
	text-align: right;
	border: 1px solid #cfcfcf;
	border-left: 0;
	background: #fff;
	white-space: nowrap;
}
.orders tr:nth-child(odd) td{
	background: #eaeaea;
}
.orders td:first-child{
	text-align: left;
}
.orders td:last-child{
	padding-right: 22px;
	position: relative;
}
.orders td button{
	position: absolute;
	right: 5px;
	top: 0;
	font: bold 13px/18px "Liberation Sans", sans-serif;
	color: #999;
}
.orders td svg{
	width: 14px;
	height: 14px;
	margin: 0 4px 0 1px;
	vertical-align: -4px;
}
.orders .sum td{
	background: #c6c6c6;
	border-color: #c6c6c6;
	font-size: 11px;
	font-weight: bold;
}
.sum span{
	font-family: "DejaVu Sans", "Noto Sans Thai", sans-serif;
	font-size: 11px;
}
.term-tabs .tab{
	padding: 0 11px 0 10px;
}
.term-tabs{
	padding-left: 4px;
}
sub{
	font-size: 8px;
	line-height: 8px;
	font-weight: bold;
	color: #e02020;
}
.status{
	display: flex;
	align-items: center;
	height: 23px;
	border-top: 1px solid #999;
	font-size: 10px;
}
.status span{
	height: 20px;
	line-height: 20px;
	padding-left: 3px;
	border-left: 1px solid #bbb;
	white-space: nowrap;
}
.status .st-help{
	flex: 1;
	border: 0;
	padding-left: 2px;
}
.st-prof{
	width: 108px;
}
.w96{
	width: 96px;
}
.w66{
	width: 65px;
}
.st-net{
	width: 116px;
}
.st-net svg{
	width: 22px;
	height: 14px;
	margin-right: 3px;
	vertical-align: -3px;
}

/* taskbar */
.taskbar{
	position: relative;
	display: flex;
	align-items: center;
	height: 37px;
	gap: 4px;
	color: #fff;
	background: linear-gradient(90deg, #1f6f9e, #3b9cc0 20%, #2f8cc0 45%, #1a64ac 55%, #1b5fa8 78%, #15386b 80%, #16396c);
	border-top: 1px solid #3b6c94;
}
.swoosh{
	position: absolute;
	left: 61%;
	top: 0;
	width: 160px;
	height: 36px;
}
.task{
	position: relative;
	width: 54px;
	height: 35px;
	display: flex;
	align-items: center;
	justify-content: center;
	flex: none;
}
.task svg{
	width: 30px;
	height: 30px;
}
.task.start svg{
	width: 36px;
	height: 36px;
}
.task.open{
	border: 1px solid #bfe0f2;
	border-radius: 3px;
	background: linear-gradient(135deg, #b8dcee, #5fa6cc);
}
.ps{
	width: 26px;
	height: 27px;
	font: bold 14px/23px "Noto Sans", sans-serif;
	color: #8fd0ff;
	background: #10154a;
	border: 2px solid #3f6fb8;
}
.badge{
	position: absolute;
	right: 11px;
	bottom: 3px;
	width: 12px;
	height: 12px;
	border-radius: 6px;
	font: bold 9px/12px "Liberation Sans", sans-serif;
	color: #111;
	background: #f8c52a;
}
.tray{
	margin-left: auto;
	display: flex;
	align-items: center;
	gap: 7px;
	font-size: 10px;
}
.tray svg{
	width: 15px;
	height: 15px;
}
.up{
	font-size: 8px;
	margin: 0 4px 0 6px;
}
.clock{
	width: 60px;
	line-height: 16px;
	text-align: center;
}
.peek{
	width: 5px;
	height: 36px;
	border-left: 1px solid #9bb;
	background: #2a4a72;
}
```
FILE: chart.js
```js
// candles: x, body top, body bottom, wick top, wick bottom, 1 = up
var candles = [
	[262,220,236,220,236,1],[277,221,223,219,226,0],[292,221,225,215,232,0],[307,220,225,213,225,1],[322,206,219,201,220,1],[337,175,207,172,207,1],
	[367,175,210,175,215,0],[382,195,211,188,214,1],[397,197,214,195,214,0],[412,215,229,206,235,0],[427,215,230,215,230,1],[442,210,216,205,225,1],
	[457,188,211,188,211,1],[472,189,204,189,208,0],[487,205,219,204,219,0],[503,219,230,219,232,0],[518,229,234,229,242,0],[533,228,234,218,236,1],
	[548,206,228,206,228,1],[563,186,206,184,208,1],[578,185,216,183,218,0],[593,204,215,178,220,1],[608,206,232,188,232,0],[623,225,232,222,235,1],
	[638,225,226,212,235,0],[653,226,251,224,261,0],[668,252,282,251,288,0],[684,283,308,267,310,0],[699,286,308,280,312,1],[714,286,287,280,297,1],
	[729,285,294,268,294,0],[744,292,295,292,295,0],[759,296,304,290,308,0],[774,285,304,276,310,1],[789,278,286,276,286,1],[804,278,279,276,284,1],
	[819,274,278,265,287,1],[834,273,280,268,280,0],[849,279,281,265,282,0],[864,273,281,252,300,1],[879,275,281,274,282,0],[894,267,281,258,284,1],
	[909,268,283,250,297,0],[925,216,283,211,289,1],[940,216,233,212,235,0],[955,207,233,189,233,1],[970,207,215,205,225,0],[985,161,214,112,218,1],
	[1000,161,164,137,175,0],[1015,151,165,149,172,1]
];
var dots = [[337,252],[352,247],[367,239],[382,233],[397,226],[458,156],[473,158],[488,161],[503,162],[518,164],[533,167],[548,170],[563,174],[593,178],[608,181],[623,183],[638,186],[653,188],[668,192],[683,200],[698,211],[713,223],[729,235],[744,244],[759,252],[774,260],[789,267],[804,314],[819,313],[834,312],[849,308],[864,303],[879,301],[894,297],[909,293],[924,289],[940,287],[955,287],[970,271],[985,258],[1000,232],[1015,219]];
var arrows = [[563,182,0],[578,180,0],[834,268,0],[909,254,0],[985,112,0],[533,259,1],[699,310,1],[864,298,1],[894,307,1],[352,168,1]];
var macd = [398,398,398,397,396,394,393,394,395,395,395,395,397,397,397,399,401,403,405,404,402,403,403,404,407,407,408,413,417,419,421,423,425,426,425,424,423,422,421,420,419,418,417,416,412,409,405,403,397,393,388];

function add(parent, tag, attrs){
	var el = document.createElementNS("http://www.w3.org/2000/svg", tag);
	for(var k in attrs){
		el.setAttribute(k, attrs[k]);
	}
	parent.appendChild(el);
}

var price = document.getElementById("price");
candles.forEach(function(c){
	var up = c[5];
	add(price, "path", {d: "M" + c[0] + " " + c[3] + "V" + c[4], stroke: up ? "#2f9a35" : "#c01818"});
	add(price, "rect", {x: c[0] - 4, y: c[1], width: 9, height: c[2] - c[1], fill: up ? "#4db848" : "#ff8c00", stroke: up ? "#4db848" : "#f03800"});
});
dots.forEach(function(d){
	add(price, "circle", {cx: d[0], cy: d[1], r: 2, fill: "#fff"});
});
arrows.forEach(function(a){
	var s = a[2] ? 1 : -1;
	add(price, "path", {d: "M" + a[0] + " " + a[1] + "l6 " + 7 * s + "l-4 " + -1 * s + "v" + 6 * s + "h-4v" + -6 * s + "l-4 " + s + "z", fill: a[2] ? "#0e0" : "#f00"});
});

var pane = document.getElementById("macd");
var line = "";
macd.forEach(function(y, i){
	var x = Math.round(262 + i * 753 / 50);
	add(pane, "path", {d: "M" + x + " 407V" + y, stroke: "#ccc", "stroke-width": 2});
	line += (i ? "L" : "M") + x + " " + y;
	if(i == 37){
		add(pane, "path", {d: line, fill: "none", stroke: "#c01818"});
		line = "M" + x + " " + y;
	}
});
add(pane, "path", {d: line, fill: "none", stroke: "#2f8f80"});
add(pane, "path", {d: "M261 397L368 394L471 395L563 400L638 404L684 406L743 415L790 422L819 423L873 423L910 420L960 415L985 411L1015 405", fill: "none", stroke: "#d8c832"});
```
